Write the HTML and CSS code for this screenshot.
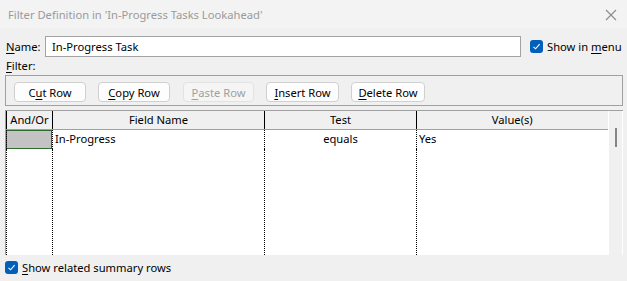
FILE: index.html
```html
<!DOCTYPE html>
<html lang="en">

<head>
    <meta charset="UTF-8">
    <meta name="viewport" content="width=device-width, initial-scale=1.0">
    <title>Filter Definition</title>
    <link rel="stylesheet" href="styles.css">
</head>

<body>
    <div class="dialog">
        <div class="titlebar">
            <span class="title">Filter Definition in 'In-Progress Tasks Lookahead'</span>
            <svg class="close" width="12" height="12" viewBox="0 0 12 12">
                <path d="M1 1 L11 11 M11 1 L1 11" stroke="#8a8a8a" stroke-width="1.1" fill="none" />
            </svg>
        </div>

        <div class="name-row">
            <label class="name-label"><u>N</u>ame:</label>
            <div class="name-input">In-Progress Task</div>
            <span class="check">
                <span class="box"><svg width="9" height="9" viewBox="0 0 9 9"><path d="M1.5 4.8 L3.6 6.8 L7.6 2.2" stroke="#fff" stroke-width="1.1" fill="none" /></svg></span>
                <span>Show in <u>m</u>enu</span>
            </span>
        </div>

        <div class="filter-label"><u>F</u>ilter:</div>

        <div class="toolbar">
            <button class="btn">C<u>u</u>t Row</button>
            <button class="btn"><u>C</u>opy Row</button>
            <button class="btn disabled"><u>P</u>aste Row</button>
            <button class="btn"><u>I</u>nsert Row</button>
            <button class="btn"><u>D</u>elete Row</button>
        </div>

        <div class="grid">
            <table class="criteria">
                <thead>
                    <tr>
                        <th class="c-andor">And/Or</th>
                        <th class="c-field">Field Name</th>
                        <th class="c-test">Test</th>
                        <th class="c-value">Value(s)</th>
                    </tr>
                </thead>
                <tbody>
                    <tr class="first">
                        <td class="c-andor"><div class="selected"></div></td>
                        <td class="c-field">In-Progress</td>
                        <td class="c-test center">equals</td>
                        <td class="c-value">Yes</td>
                    </tr>
                    <tr class="filler">
                        <td class="c-andor"></td>
                        <td class="c-field"></td>
                        <td class="c-test"></td>
                        <td class="c-value"></td>
                    </tr>
                </tbody>
            </table>
            <div class="scrollbar">
                <div class="thumb"></div>
            </div>
        </div>

        <div class="summary-row">
            <span class="check">
                <span class="box"><svg width="9" height="9" viewBox="0 0 9 9"><path d="M1.5 4.8 L3.6 6.8 L7.6 2.2" stroke="#fff" stroke-width="1.1" fill="none" /></svg></span>
                <span><u>S</u>how related summary rows</span>
            </span>
        </div>
    </div>
</body>

</html>
```

FILE: styles.css
```css
* {
    box-sizing: border-box;
}

body {
    margin: 0;
    background-color: #f0f0f0;
    font-family: "Noto Sans", "Open Sans", sans-serif;
    font-size: 11.2px;
    color: #000;
}

u {
    text-decoration-thickness: 1px;
    text-underline-offset: 2px;
}

.dialog {
    width: 627px;
    height: 281px;
    overflow: hidden;
}

.titlebar {
    height: 28px;
    background-color: #f3f3f3;
    display: flex;
    align-items: center;
    justify-content: space-between;
    padding: 0 10px 0 8px;
}

.title {
    color: #9a9a9a;
}

.close {
    margin-top: 1px;
}

.name-row {
    display: flex;
    align-items: center;
    height: 21px;
    margin-top: 8px;
    padding-left: 6px;
}

.name-label {
    width: 39px;
}

.name-input {
    width: 476px;
    height: 21px;
    background-color: #fff;
    border: 1px solid #a3a3a3;
    padding: 0 0 0 6px;
    line-height: 19px;
}

.check {
    display: flex;
    align-items: center;
    gap: 4px;
    white-space: nowrap;
}

.name-row .check {
    margin-left: 9px;
}

.box {
    flex: none;
    width: 13px;
    height: 13px;
    border-radius: 3px;
    background-color: #005fb8;
    display: flex;
    align-items: center;
    justify-content: center;
}

.filter-label {
    padding-left: 6px;
    height: 18px;
    line-height: 18px;
}

.toolbar {
    margin: 0 4px 0 5px;
    height: 31px;
    border: 1px solid #a0a0a0;
    display: flex;
    align-items: flex-start;
    padding: 6px 0 0 8px;
    gap: 12px;
}

.btn {
    height: 20px;
    width: 72px;
    padding: 0;
    font-family: inherit;
    font-size: 11.2px;
    color: #000;
    background-color: #fdfdfd;
    border: 1px solid #d0d0d0;
    border-radius: 4px;
}

.btn.disabled {
    color: #a0a0a0;
    background-color: #f5f5f5;
    border-color: #e2e2e2;
}

.btn:nth-child(3) {
    margin-left: 1px;
    width: 71px;
}

.btn:nth-child(4) {
    width: 73px;
}

.btn:nth-child(5) {
    width: 74px;
}

.grid {
    margin: 4px 4px 0 5px;
    height: 145px;
    border-top: 1px solid #a0a0a0;
    border-left: 1px solid #a0a0a0;
    display: flex;
    align-items: flex-start;
    background-color: #fff;
}

.criteria {
    border-collapse: collapse;
    table-layout: fixed;
    width: 601px;
}

.criteria th {
    height: 18px;
    font-weight: normal;
    background-color: #f0f0f0;
    border-right: 1px solid #000;
    border-bottom: 1px solid #a0a0a0;
    padding: 0;
    text-align: center;
    line-height: 16px;
}

.criteria th:first-child {
    border-left: 1px solid #000;
}

.criteria th.c-value {
    border-right: none;
}

.criteria td {
    padding: 0 0 0 2px;
    border-right: 1px dotted #000;
    vertical-align: top;
    line-height: 17px;
}

.criteria td.c-andor {
    border-left: 1px dotted #000;
    padding: 0;
}

.criteria td.c-value {
    border-right: none;
}

.criteria td.center {
    text-align: center;
    padding: 0;
}

.criteria tr.first td {
    height: 19px;
}

.criteria tr.filler td {
    height: 106px;
}

.c-andor {
    width: 46px;
}

.c-field {
    width: 212px;
}

.c-test {
    width: 152px;
}

.c-value {
    width: 191px;
}

.selected {
    height: 19px;
    background-color: #c3c3c3;
    border: 1px solid #2e6b2e;
    margin-left: -1px;
}

.scrollbar {
    width: 16px;
    height: 144px;
    background-color: #f0f0f0;
    border-left: 1px solid #fff;
    border-right: 1px solid #fff;
    position: relative;
}

.thumb {
    position: absolute;
    left: 6px;
    top: 17px;
    width: 2px;
    height: 19px;
    background-color: #858585;
}

.summary-row {
    padding: 5px 0 0 5px;
}
```
